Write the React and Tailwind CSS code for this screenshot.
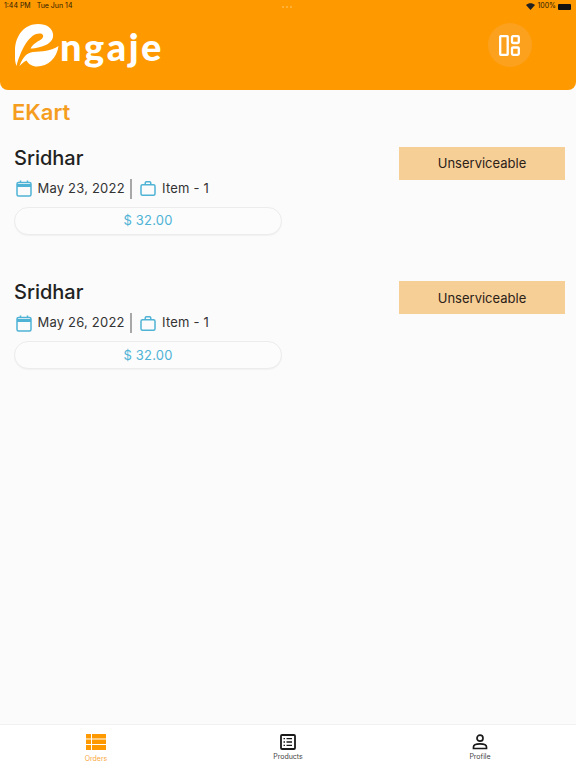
const font = { fontFamily: '"Inter", "Liberation Sans", sans-serif' };

function Logo() {
  return (
    <div className="flex items-end">
      <svg width="44" height="43" viewBox="0 0 44 43" className="block">
        <path fill="#fff" d="M1.500 42 C-0.500 37 0 33 0 27 C0 11 10 0 23 0 C32 0 37 4 38 10 C39 17 33 21 25 23 C21 24 18 24.500 15.500 24.500 C18 20 22 18 26 15.500 C29 13.500 29 10 25.500 9.500 C16 8.500 7 22 1.500 42 Z" />
        <path fill="#fff" d="M4.500 42 C8 33 12 28.500 18 28 C27 27.500 36 27 43.500 22 C42 34 33 42.500 22 42.500 C17 42.500 13.500 40 11.500 36.500 C9 37.500 7 39.500 4.500 42 Z" />
      </svg>
      <span className="text-white font-black text-[38px] leading-[44px] tracking-[2.500px] ml-[1px] mb-[-1px]" style={{ fontFamily: '"Lato", "Liberation Sans", sans-serif' }}>ngaje</span>
    </div>
  );
}

function Calendar() {
  return (
    <svg width="16" height="17" viewBox="0 0 16 17" fill="none" stroke="#4fb3d6" strokeWidth="1.500">
      <rect x="1" y="2.500" width="14" height="13.500" rx="1.500" />
      <path d="M1 5.500h14" strokeWidth="3" />
      <path d="M4.500 0.500v2.500M11.500 0.500v2.500" />
    </svg>
  );
}

function Briefcase() {
  return (
    <svg width="16" height="15" viewBox="0 0 16 15" fill="none" stroke="#4fb3d6" strokeWidth="1.500">
      <rect x="1" y="3.750" width="14" height="10.500" rx="1.500" />
      <path d="M5.250 3.750V2a1.200 1.200 0 0 1 1.200-1.200h3.100A1.200 1.200 0 0 1 10.750 2v1.750" />
    </svg>
  );
}

function Order({ date }) {
  return (
    <div className="flex justify-between items-start pl-[14px] pr-[11px] h-[134.500px]">
      <div className="w-[268px]">
        <div className="text-[20px] leading-[24px] font-medium text-[#222] -mt-[1px]">Sridhar</div>
        <div className="flex items-center h-[22px] mt-[8px] text-[13px] text-[#333] tracking-[0.2px]">
          <div className="ml-[2px] w-[16px]"><Calendar /></div>
          <span className="ml-[5.500px] w-[90px] whitespace-nowrap">{date}</span>
          <div className="w-[2px] h-[20px] bg-[#a8a8a8] ml-[2.500px]" />
          <div className="ml-[7.500px] w-[16px]"><Briefcase /></div>
          <span className="ml-[6.500px] whitespace-nowrap">Item - 1</span>
        </div>
        <div className="mt-[7px] h-[28px] pt-[1px] rounded-[14px] border border-[#ececec] bg-[#fcfcfc] shadow-[0_1px_1px_rgba(0,0,0,0.04)] flex items-center justify-center text-[13px] text-[#4fb3d6] tracking-[0.2px]">$ 32.00</div>
      </div>
      <div className="w-[166px] h-[33px] pt-[2px] bg-[#f6cf97] flex items-center justify-center text-[13px] text-[#2b2117]">Unserviceable</div>
    </div>
  );
}

function Tab({ label, textColor, labelClass, children }) {
  return (
    <div className="w-[192px] flex flex-col items-center">
      <div className="h-[18px] flex items-center justify-center">{children}</div>
      <span className={`text-[7px] leading-[10px] ${labelClass}`} style={{ color: textColor }}>{label}</span>
    </div>
  );
}

export default function App() {
  return (
    <div className="w-[576px] h-[768px] overflow-hidden flex flex-col bg-[#fbfbfb]" style={font}>
      <header className="relative h-[89.500px] shrink-0 bg-[#ff9900] rounded-b-[8px] flex flex-col">
        <div className="h-[11px] flex items-center justify-between pl-[4px] pr-[5px] mt-[1px] text-[7px] text-[#2a1b00]">
          <div className="flex gap-[6px]"><span>1:44 PM</span><span>Tue Jun 14</span></div>
          <div className="flex items-center gap-[2px]">
            <svg width="9" height="7" viewBox="0 0 12 9"><path fill="#222" d="M6 9 L0 2.500 C3.500-0.800 8.500-0.800 12 2.500 Z" /></svg>
            <span>100%</span>
            <div className="w-[13px] h-[6px] bg-[#111] rounded-[1px]" />
          </div>
        </div>
        <div className="absolute left-[282px] top-[6px] flex gap-[2px]">
          <div className="w-[2px] h-[2px] rounded-full bg-[#ffb84a]" />
          <div className="w-[2px] h-[2px] rounded-full bg-[#ffb84a]" />
          <div className="w-[2px] h-[2px] rounded-full bg-[#ffb84a]" />
        </div>
        <div className="flex items-center justify-between pl-[15px] pr-[44px] mt-[12px]">
          <Logo />
          <div className="w-[44px] h-[44px] rounded-full bg-[#fba11e] flex items-center justify-center -mt-[1px] pr-[2px]">
            <svg width="21" height="21" viewBox="0 0 21 21" fill="none" stroke="#fff" strokeWidth="2.300">
              <rect x="1.200" y="1.200" width="7.500" height="18.600" rx="0.500" />
              <rect x="13" y="1.200" width="6.800" height="6.800" rx="1" />
              <rect x="13" y="12.500" width="6.800" height="7.300" rx="1" />
            </svg>
          </div>
        </div>
      </header>
      <main className="flex-1">
        <h1 className="pl-[12px] mt-[9px] text-[22px] leading-[26px] font-semibold text-[#f59d1e]">EKart</h1>
        <div className="mt-[22px]">
          <Order date="May 23, 2022" />
          <Order date="May 26, 2022" />
        </div>
      </main>
      <nav className="h-[44px] shrink-0 bg-white border-t border-[#f1f1f1] flex pt-[8px]">
        <Tab label="Orders" textColor="#f8a83a" labelClass="mt-[3px]">
          <svg width="20" height="16" viewBox="0 0 20 16" fill="#ff9900">
            <rect x="0" y="0" width="5" height="4.500" /><rect x="6" y="0" width="14" height="4.500" />
            <rect x="0" y="5.500" width="5" height="4.500" /><rect x="6" y="5.500" width="14" height="4.500" />
            <rect x="0" y="11" width="5" height="5" /><rect x="6" y="11" width="14" height="5" />
          </svg>
        </Tab>
        <Tab label="Products" textColor="#444" labelClass="mt-[1px]">
          <svg width="16" height="16" viewBox="0 0 16 16" fill="none" stroke="#1a1a1a">
            <rect x="1" y="1" width="14" height="14" rx="1" strokeWidth="1.800" />
            <path d="M6.500 4.700h5.500M6.500 8h5.500M6.500 11.300h5.500M3.500 4.700h1.500M3.500 8h1.500M3.500 11.300h1.500" strokeWidth="1.300" />
          </svg>
        </Tab>
        <Tab label="Profile" textColor="#444" labelClass="mt-[1px]">
          <svg width="16" height="16" viewBox="0 0 16 16" fill="none" stroke="#1a1a1a" strokeWidth="1.700">
            <circle cx="8" cy="4.200" r="3" />
            <path d="M1.500 14.500v-1.500c0-2 3-3.200 6.500-3.200s6.500 1.200 6.500 3.200v1.500Z" />
          </svg>
        </Tab>
      </nav>
    </div>
  );
}
